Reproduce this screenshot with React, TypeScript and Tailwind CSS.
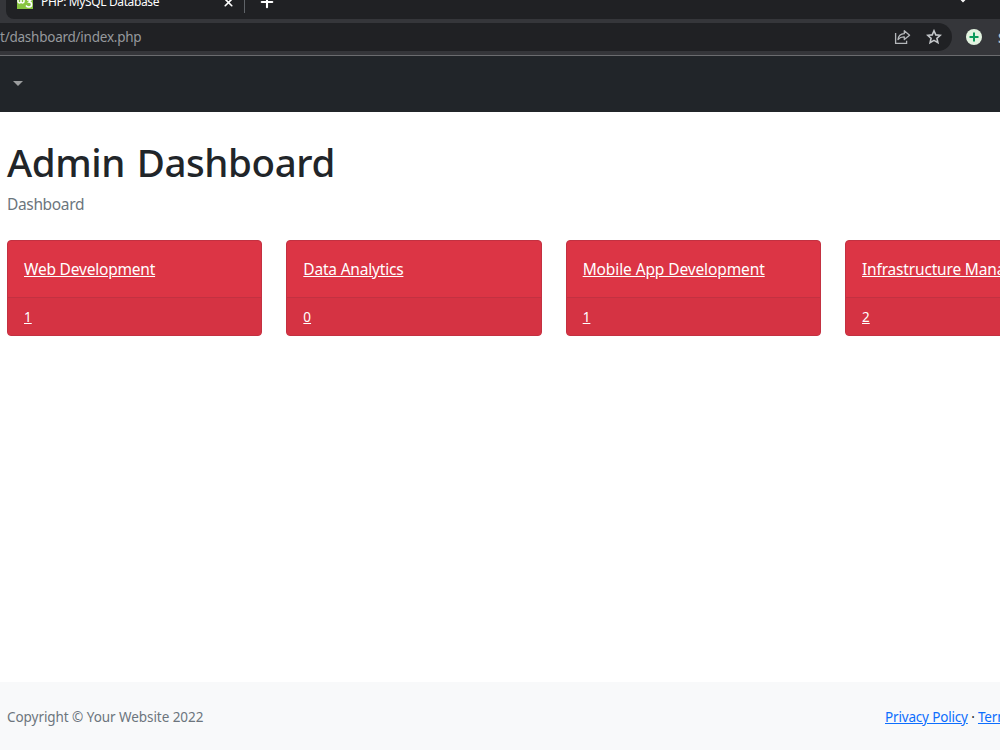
import { Plus, X } from 'lucide-react';

const cards = [
  { title: 'Web Development', count: 1, tracking: 'tracking-[-0.2px]' },
  { title: 'Data Analytics', count: 0, tracking: 'tracking-[-0.2px]' },
  { title: 'Mobile App Development', count: 1, tracking: 'tracking-[-0.11px]' },
  { title: 'Infrastructure Management', count: 2, tracking: 'tracking-[-0.17px]' },
];

function TabStrip() {
  return (
    <div className="h-[19px] bg-[#35363a] pl-[6px]">
      <div className="flex h-full items-start overflow-hidden rounded-bl-[8px] bg-[#202124] text-white">
        <svg className="ml-[11px] h-[9px] w-[16px] shrink-0" viewBox="0 0 16 9">
          <rect width="16" height="9" fill="#87c440" />
          <path
            d="M1 0v1.6q0 1.4 1.4 1.4T4 1.6V0M4 1.6Q4 3 5.5 3T7 1.6V0M10 0h4l-2 2q2.6 0 2.6 2.5T12 7q-2 0-3-1.5"
            fill="none"
            stroke="#fff"
            strokeWidth="1.5"
          />
        </svg>
        <span className="-mt-[6px] ml-[8px] w-[181px] whitespace-nowrap text-[12px] leading-[16px] tracking-[-0.38px]">
          PHP: MySQL Database
        </span>
        <X className="-mt-[4px] h-[13px] w-[13px] shrink-0" strokeWidth={3} />
        <div className="ml-[9px] h-[13px] w-px bg-[#5f6368]" />
        <Plus className="-mt-[7px] ml-[13px] h-[18px] w-[18px] shrink-0" strokeWidth={2.8} />
        <svg className="ml-[682px] h-[3px] w-[10px] shrink-0" viewBox="0 0 10 3">
          <path d="M2.5-1 5 1.5 7.5-1" fill="none" stroke="#fff" strokeWidth="1.3" />
        </svg>
      </div>
    </div>
  );
}

function AddressBar() {
  return (
    <div className="flex h-[37px] items-center overflow-hidden border-b border-[#6b6c6f] bg-[#35363a]">
      <div className="flex h-[28px] w-[952px] shrink-0 items-center justify-between rounded-r-full bg-[#202124] pr-[10px]">
        <span className="text-[13.5px] tracking-[-0.24px] text-[#96999d]">t/dashboard/index.php</span>
        <div className="flex items-center gap-[15px]">
          <svg className="h-[16px] w-[17px]" viewBox="0 0 17 16" fill="none" stroke="#b4b7ba" strokeWidth="1.3">
            <path d="M1.6 4v10.3h11V11.8" />
            <path d="M4 10.5Q4.6 5 10.3 4.7V1.7L15.6 6.2l-5.3 4.4V7.8Q6.4 7.6 4 10.5Z" strokeLinejoin="round" />
          </svg>
          <svg className="h-[16px] w-[16px]" viewBox="0 0 16 16" fill="none" stroke="#c4c7ca" strokeWidth="1.6">
            <path d="m8 1.8 1.8 4.1 4.5.4-3.4 3 1 4.4L8 11.4l-3.9 2.3 1-4.4-3.4-3 4.5-.4Z" />
          </svg>
        </div>
      </div>
      <svg className="ml-[14px] h-[16px] w-[16px] shrink-0" viewBox="0 0 16 16">
        <circle cx="8" cy="8" r="8" fill="#e3f3e0" />
        <path d="M8 3.5v9M3.5 8h9" stroke="#0b9a5a" strokeWidth="2" />
      </svg>
      <span className="ml-[16px] text-[15px] font-bold text-[#bdc1c6]">S</span>
    </div>
  );
}

function Card({ title, count, tracking }: { title: string; count: number; tracking: string }) {
  return (
    <div className="h-[96px] w-[255.33px] shrink-0 overflow-hidden rounded-[4px] border border-[#c33141] bg-[#dc3545] text-white">
      <div className={`h-[56px] px-4 py-4 text-[15.5px] leading-[25px] whitespace-nowrap ${tracking}`}>
        <a href="#" className="underline">
          {title}
        </a>
      </div>
      <div className="h-[38px] border-t border-[#c33141] bg-[#d53343] px-4 py-2 text-[13.5px] leading-[23px]">
        <a href="#" className="underline">
          {count}
        </a>
      </div>
    </div>
  );
}

export default function App() {
  return (
    <div className="flex h-[750px] w-[1000px] flex-col overflow-hidden bg-white font-['Noto_Sans','Open_Sans',sans-serif] text-[#212529]">
      <TabStrip />
      <AddressBar />
      <nav className="flex h-[56px] shrink-0 items-center bg-[#212529] pl-[13px]">
        <div className="mt-[-1px] border-x-[5px] border-t-[5px] border-x-transparent border-t-[#9b9d9e]" />
      </nav>
      <main className="flex-1 pl-[7px]">
        <h1 className="mt-[26px] text-[38.5px] leading-[48px] font-medium tracking-[-0.4px] [word-spacing:2px]">
          Admin Dashboard
        </h1>
        <p className="mt-[6px] text-[15.5px] leading-[24px] tracking-[-0.35px] text-[#6c757d]">Dashboard</p>
        <div className="mt-6 flex gap-6">
          {cards.map((card) => (
            <Card key={card.title} {...card} />
          ))}
        </div>
      </main>
      <footer className="flex h-[68px] shrink-0 items-center bg-[#f8f9fa] pt-[2px] pl-[7px] text-[13.5px] whitespace-nowrap">
        <div className="w-[878px] shrink-0 tracking-[-0.06px] text-[#6c757d]">Copyright © Your Website 2022</div>
        <div className="tracking-[-0.17px]">
          <a href="#" className="text-[#0d6efd] underline">
            Privacy Policy
          </a>
          {' · '}
          <a href="#" className="text-[#0d6efd] underline">
            Terms &amp; Conditions
          </a>
        </div>
      </footer>
    </div>
  );
}
